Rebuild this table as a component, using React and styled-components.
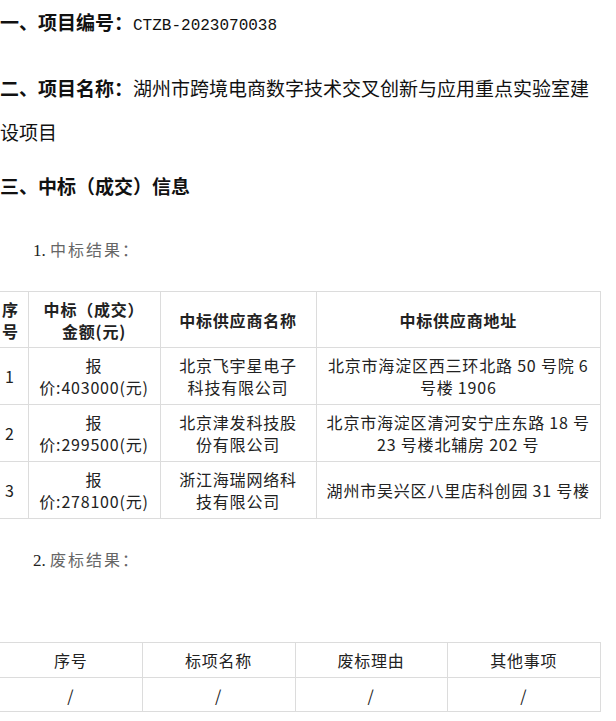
import React from 'react';
import styled, { createGlobalStyle } from 'styled-components';

const GlobalStyle = createGlobalStyle`
	body {
		margin: 0;
		background: #fff;
		font-family: "Noto Sans CJK SC", "Liberation Sans", sans-serif;
		color: #111;
	}
`;

const Page = styled.div`
	width: 601px;
`;

const Heading = styled.p`
	margin: 0 0 ${props => props.gap || 0}px;
	font-size: 19px;
	line-height: 44px;
	color: #111;
`;

const Label = styled.span`
	font-weight: bold;
`;

const Code = styled.span`
	font-family: "Liberation Mono", monospace;
	font-size: 16px;
`;

const SubTitle = styled.p`
	margin: ${props => props.top}px 0 0 33px;
	height: 32px;
	line-height: 32px;
	font-family: "Liberation Serif", "Noto Sans CJK SC", serif;
	font-size: 17px;
	color: #222;
`;

const SubText = styled.span`
	color: #666;
	letter-spacing: 2px;
	font-family: "Noto Sans CJK SC", serif;
	font-size: 16px;
`;

const Table = styled.table`
	width: 601px;
	border-collapse: collapse;
	table-layout: fixed;
	margin-top: ${props => props.top}px;
	font-size: 16px;
	letter-spacing: 0.8px;
	color: #222;
`;

const Cell = styled.td`
	border: 1px solid #dcdcdc;
	border-left: ${props => (props.first ? 'none' : '1px solid #dcdcdc')};
	padding: ${props => props.pad || '5px 12px'};
	text-align: ${props => props.align || 'center'};
	vertical-align: middle;
	line-height: 22px;
	height: ${props => props.h || 'auto'};
	font-weight: ${props => (props.bold ? 'bold' : 'normal')};
	box-sizing: border-box;
`;

const results = [
	{ no: '1', price: '403000', name: '北京飞宇星电子科技有限公司', addr: '北京市海淀区西三环北路 50 号院 6 号楼 1906' },
	{ no: '2', price: '299500', name: '北京津发科技股份有限公司', addr: '北京市海淀区清河安宁庄东路 18 号 23 号楼北辅房 202 号' },
	{ no: '3', price: '278100', name: '浙江海瑞网络科技有限公司', addr: '湖州市吴兴区八里店科创园 31 号楼' },
];

const App = () => (
	<Page>
		<GlobalStyle />
		<Heading gap={18}>
			<Label>一、项目编号：</Label>
			<Code>CTZB-2023070038</Code>
		</Heading>
		<Heading gap={10}>
			<Label>二、项目名称：</Label>
			湖州市跨境电商数字技术交叉创新与应用重点实验室建设项目
		</Heading>
		<Heading>
			<Label>三、中标（成交）信息</Label>
		</Heading>
		<SubTitle top={25}>
			1. <SubText>中标结果：</SubText>
		</SubTitle>
		<Table top={26}>
			<colgroup>
				<col style={{ width: 28 }} />
				<col style={{ width: 132 }} />
				<col style={{ width: 156 }} />
				<col />
			</colgroup>
			<thead>
				<tr>
					<Cell as="th" first bold align="left" pad="5px 2px" h="56px">序号</Cell>
					<Cell as="th" bold pad="5px 10px">中标（成交）金额(元)</Cell>
					<Cell as="th" bold>中标供应商名称</Cell>
					<Cell as="th" bold>中标供应商地址</Cell>
				</tr>
			</thead>
			<tbody>
				{results.map(r => (
					<tr key={r.no}>
						<Cell first align="left" pad="5px 5px" h="57px">{r.no}</Cell>
						<Cell pad="5px 6px">报价:{r.price}(元)</Cell>
						<Cell pad="5px 16px">{r.name}</Cell>
						<Cell pad="5px 10px">{r.addr}</Cell>
					</tr>
				))}
			</tbody>
		</Table>
		<SubTitle top={24}>
			2. <SubText>废标结果：</SubText>
		</SubTitle>
		<Table top={67}>
			<colgroup>
				<col style={{ width: 142 }} />
				<col style={{ width: 153 }} />
				<col style={{ width: 152 }} />
				<col />
			</colgroup>
			<tbody>
				<tr>
					<Cell first h="35px" pad="4px 8px">序号</Cell>
					<Cell pad="4px 8px">标项名称</Cell>
					<Cell pad="4px 8px">废标理由</Cell>
					<Cell pad="4px 8px">其他事项</Cell>
				</tr>
				<tr>
					<Cell first h="34px" pad="4px 8px">/</Cell>
					<Cell pad="4px 8px">/</Cell>
					<Cell pad="4px 8px">/</Cell>
					<Cell pad="4px 8px">/</Cell>
				</tr>
			</tbody>
		</Table>
	</Page>
);

export default App;
